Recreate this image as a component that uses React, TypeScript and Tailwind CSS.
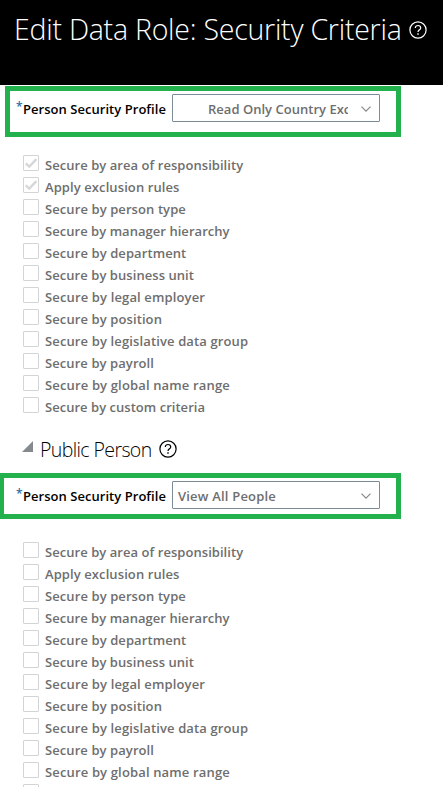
import React from 'react';

type Item = { label: string; spacing: string };

const criteria: Item[] = [
  { label: 'Secure by area of responsibility', spacing: 'tracking-[0.05px]' },
  { label: 'Apply exclusion rules', spacing: 'tracking-[0.09px]' },
  { label: 'Secure by person type', spacing: 'tracking-[0.09px]' },
  { label: 'Secure by manager hierarchy', spacing: 'tracking-[0.04px]' },
  { label: 'Secure by department', spacing: 'tracking-[0.09px]' },
  { label: 'Secure by business unit', spacing: 'tracking-[0.06px]' },
  { label: 'Secure by legal employer', spacing: 'tracking-[0.14px]' },
  { label: 'Secure by position', spacing: 'tracking-[0.1px]' },
  { label: 'Secure by legislative data group', spacing: 'tracking-[0.13px]' },
  { label: 'Secure by payroll', spacing: 'tracking-[0.08px]' },
  { label: 'Secure by global name range', spacing: 'tracking-[0.15px]' },
  { label: 'Secure by custom criteria', spacing: 'tracking-[0.03px]' },
];

function HelpIcon({ className }: { className: string }) {
  return (
    <svg viewBox="0 0 18 18" fill="none" stroke="currentColor" className={className}>
      <circle cx="9" cy="9" r="8.1" strokeWidth="1.2" />
      <path d="M6.3 7.1C6.3 5.4 7.5 4.5 9 4.5s2.7 1 2.7 2.4c0 1.9-2.7 2-2.7 4.2" strokeWidth="1.2" />
      <path d="M9 12.3v1.5" strokeWidth="1.4" />
    </svg>
  );
}

function ProfileRow({ className, children }: { className: string; children: React.ReactNode }) {
  return (
    <div className={`flex border-[5px] border-[#22b14c] ${className}`}>
      <span className="mt-[5px] h-[22px] w-[7px] shrink-0 text-[12px] font-semibold leading-[22px] text-[#2c6fa8]">*</span>
      <label className="mt-[7px] w-[149px] shrink-0 whitespace-nowrap text-[13px] font-semibold leading-[22px] tracking-[0.04px] text-black">
        Person Security Profile
      </label>
      <div className="mt-[3px] flex h-7 w-[208px] shrink-0 items-center rounded-[1px] border border-[#7b8c98] pl-[5px] pr-[8px]">
        {children}
        <svg viewBox="0 0 10 6" fill="none" stroke="#84898d" strokeWidth="1.2" className="ml-auto mt-[2px] h-[6px] w-[10px] shrink-0">
          <path d="M.5.6 5 5.1 9.500.6" />
        </svg>
      </div>
    </div>
  );
}

function CriteriaList({ checkedCount }: { checkedCount: number }) {
  return (
    <ul className="pl-[23px]">
      {criteria.map((item, i) => (
        <li key={item.label} className="flex h-[22px]">
          <span className="h-4 w-4 shrink-0 rounded-[1px] border border-[#d2d4d5] bg-white">
            {i < checkedCount && (
              <svg viewBox="0 0 14 14" fill="none" stroke="#d6d7d8" strokeWidth="2.4" className="h-[14px] w-[14px]">
                <path d="M1.8 7.300 5.300 10.600 12.400 3.200" />
              </svg>
            )}
          </span>
          <span className={`ml-[6px] whitespace-nowrap text-[13px] font-semibold leading-5 text-[#6e6e6e] ${item.spacing}`}>
            {item.label}
          </span>
        </li>
      ))}
    </ul>
  );
}

export default function App() {
  return (
    <main className="h-[787px] w-[443px] overflow-hidden bg-white font-['Open_Sans','Noto_Sans',sans-serif]">
      <header className="flex h-[85px] bg-black pl-[14px] pt-[9px] text-white">
        <h1 className="w-[395px] shrink-0 whitespace-nowrap text-[28.5px] font-light leading-[40px] tracking-[-0.24px]">
          Edit Data Role: Security Criteria
        </h1>
        <HelpIcon className="mt-[12px] h-[18px] w-[18px] shrink-0" />
      </header>
      <ProfileRow className="ml-[5px] mt-px h-[51px] w-[396px] pl-[6px]">
        <span className="ml-[30px] mt-px w-[140px] overflow-hidden whitespace-nowrap text-[13px] font-semibold leading-5 tracking-[0.02px] text-[#6e6e6e]">
          Read Only Country Exc
        </span>
      </ProfileRow>
      <div className="mt-[18px]">
        <CriteriaList checkedCount={2} />
      </div>
      <section className="mt-[19px] flex h-[35px] pl-[22px]">
        <svg viewBox="0 0 12 12" className="mt-[3px] h-3 w-3 shrink-0">
          <path d="M11 0V11H0Z" fill="#858a8e" />
        </svg>
        <h2 className="-mt-[2px] ml-[6px] w-[119px] shrink-0 whitespace-nowrap text-[19.5px] font-light leading-7 tracking-[-0.6px] text-black">
          Public Person
        </h2>
        <HelpIcon className="mt-[2px] h-[18px] w-[18px] shrink-0 text-black" />
      </section>
      <ProfileRow className="-ml-px h-[46px] w-[402px] pl-[12px]">
        <span className="mt-px whitespace-nowrap text-[13px] font-semibold leading-5 tracking-[0.2px] text-[#6e6e6e]">
          View All People
        </span>
      </ProfileRow>
      <div className="mt-[23px]">
        <CriteriaList checkedCount={0} />
      </div>
    </main>
  );
}
